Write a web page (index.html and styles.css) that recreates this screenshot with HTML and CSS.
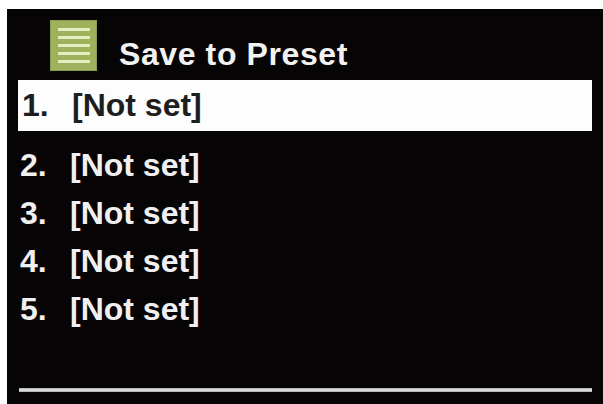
FILE: index.html
```html
<!DOCTYPE html>
<html>
<head>
<meta charset="utf-8">
<link rel="stylesheet" href="styles.css">
</head>
<body>
<div class="screen">
  <div class="header">
    <div class="icon">
      <span class="ln"></span><span class="ln"></span><span class="ln"></span><span class="ln"></span><span class="ln"></span>
    </div>
    <div class="title">Save to Preset</div>
  </div>
  <ul class="list">
    <li class="row selected"><span class="num">1.</span><span class="label">[Not set]</span></li>
    <li class="row"><span class="num">2.</span><span class="label">[Not set]</span></li>
    <li class="row"><span class="num">3.</span><span class="label">[Not set]</span></li>
    <li class="row"><span class="num">4.</span><span class="label">[Not set]</span></li>
    <li class="row"><span class="num">5.</span><span class="label">[Not set]</span></li>
  </ul>
  <div class="divider"></div>
</div>
</body>
</html>
```

FILE: styles.css
```css
html, body {
  margin: 0;
  padding: 0;
  background: #ffffff;
}
body {
  padding: 9px 0 0 7px;
  font-family: "Liberation Sans", Arial, sans-serif;
  font-weight: bold;
}
.screen {
  width: 596px;
  height: 395px;
  background: #060404;
  box-sizing: border-box;
  display: flex;
  flex-direction: column;
}
.header {
  height: 71px;
  box-sizing: border-box;
  padding: 11px 0 0 43px;
  display: flex;
  align-items: flex-start;
}
.icon {
  width: 47px;
  height: 51px;
  box-sizing: border-box;
  background: #a0b15e;
  border: 1px solid #8c9d4c;
  display: flex;
  flex-direction: column;
  justify-content: center;
  align-items: center;
  gap: 5px;
}
.ln {
  display: block;
  width: 32px;
  height: 3px;
  background: #e6edc0;
}
.title {
  margin: 16px 0 0 22px;
  font-size: 32px;
  line-height: 36px;
  letter-spacing: 0.6px;
  color: #f2f2f2;
}
.list {
  list-style: none;
  margin: 0;
  padding: 0;
}
.row {
  display: flex;
  height: 48px;
  line-height: 48px;
  font-size: 32px;
  color: #f0f0f0;
  padding-left: 13px;
}
.row.selected {
  margin: 0 0 10px 11px;
  width: 574px;
  height: 51px;
  line-height: 51px;
  box-sizing: border-box;
  padding-left: 4px;
  background: #fdfdfd;
  color: #1e1e1e;
}
.num {
  width: 50px;
  flex: none;
}
.divider {
  margin: 55px 0 0 12px;
  width: 573px;
  height: 4px;
  background: linear-gradient(#a8a8a8, #ededed, #a8a8a8);
}
```
